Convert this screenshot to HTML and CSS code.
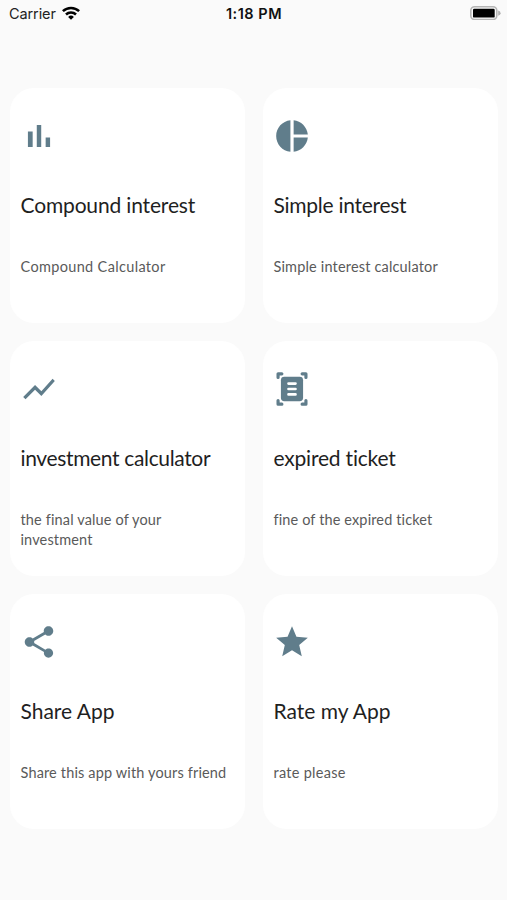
FILE: index.html
```html
<!DOCTYPE html>
<html lang="en">
<head>
<meta charset="utf-8">
<meta name="viewport" content="width=device-width">
<title>Calculators</title>
<link rel="stylesheet" href="styles.css">
</head>
<body>
<header class="status">
  <div class="carrier"><span>Carrier</span>
    <svg class="wifi" viewBox="0 0 18 14"><g fill="none" stroke="#000" stroke-width="2.5"><path d="M.9 5.2a11.6 11.6 0 0 1 16.2 0"/><path d="M4 8.5a7.1 7.1 0 0 1 10 0"/></g><path d="M9 13.8 6.1 10.9a4.2 4.2 0 0 1 5.8 0z"/></svg>
  </div>
  <div class="time">1:18 PM</div>
  <div class="power">
    <svg class="battery" viewBox="0 0 31 14"><rect x=".8" y=".8" width="26" height="12.8" rx="3.8" fill="#fafafa" stroke="#b5b5b5" stroke-width="1.6"/><rect x="3" y="2.8" width="21.7" height="8.8" rx="1.2"/><path d="M28.2 4.6q2.4.9 2.4 2.6t-2.4 2.6z" fill="#b0b0b0"/></svg>
  </div>
</header>
<main class="grid">
  <section class="card">
    <svg class="icon" viewBox="0 0 24 24"><path d="M5 9.2h3V19H5zM10.6 5h2.8v14h-2.8zm5.6 8H19v6h-2.8z"/></svg>
    <h2 class="title t1">Compound interest</h2>
    <p class="desc d1">Compound Calculator</p>
  </section>
  <section class="card">
    <svg class="icon" viewBox="0 0 24 24"><path d="M11 2v20c-5.07-.5-9-4.79-9-10s3.93-9.5 9-10zm2.03 0v8.99H22c-.47-4.74-4.24-8.52-8.97-8.99zm0 11.01V22c4.74-.47 8.5-4.25 8.97-8.99h-8.97z"/></svg>
    <h2 class="title t2">Simple interest</h2>
    <p class="desc d2">Simple interest calculator</p>
  </section>
  <section class="card">
    <svg class="icon" viewBox="0 0 24 24"><path d="M3.5 18.49l6-6.01 4 4L22 6.92l-1.41-1.41-7.09 7.97-4-4L2 16.99z"/></svg>
    <h2 class="title t3">investment calculator</h2>
    <p class="desc d3">the final value of your<br>investment</p>
  </section>
  <section class="card">
    <svg class="icon" viewBox="0 0 24 24"><g fill="none" stroke="#607d8b" stroke-width="2" stroke-linecap="round" stroke-linejoin="round"><path d="M3.2 4.7V2.4h2.4M18.4 2.4h2.4v2.3M3.2 19.3v2.3h2.4M18.4 21.6h2.4v-2.3"/></g><rect x="5" y="4.3" width="14" height="15.5" rx="2.2"/><path stroke="#fff" stroke-width="1.7" stroke-linecap="round" d="M9.8 8.6h4.4M9.8 12h4.4M9.8 15.4h4.4"/></svg>
    <h2 class="title t4">expired ticket</h2>
    <p class="desc d4">fine of the expired ticket</p>
  </section>
  <section class="card">
    <svg class="icon" viewBox="0 0 24 24"><path d="M18 16.08c-.76 0-1.44.3-1.96.77L8.91 12.7c.05-.23.09-.46.09-.7s-.04-.47-.09-.7l7.05-4.11c.54.5 1.25.81 2.04.81 1.66 0 3-1.34 3-3s-1.34-3-3-3-3 1.34-3 3c0 .24.04.47.09.7L8.04 9.81C7.5 9.31 6.79 9 6 9c-1.66 0-3 1.34-3 3s1.34 3 3 3c.79 0 1.5-.31 2.04-.81l7.12 4.16c-.05.21-.08.43-.08.65 0 1.61 1.31 2.92 2.92 2.92s2.92-1.31 2.92-2.92-1.31-2.92-2.92-2.92z"/></svg>
    <h2 class="title t5">Share App</h2>
    <p class="desc d5">Share this app with yours friend</p>
  </section>
  <section class="card">
    <svg class="icon" viewBox="0 0 24 24"><path d="M12 17.27 18.18 21l-1.64-7.03L22 9.24l-7.19-.61L12 2 9.19 8.63 2 9.24l5.46 4.73L5.82 21z"/></svg>
    <h2 class="title t6">Rate my App</h2>
    <p class="desc d6">rate please</p>
  </section>
</main>
</body>
</html>
```
FILE: styles.css
```css
* { box-sizing: border-box; }
body {
  margin: 0;
  height: 900px;
  background: #fafafa;
  font-family: Lato, sans-serif;
}
.status {
  height: 88px;
  padding: 5px 6px 0 9px;
  display: grid;
  grid-template-columns: 1fr auto 1fr;
  align-items: start;
  font: 14.5px/18px Inter, sans-serif;
  color: #222;
}
.carrier { display: flex; gap: 6px; letter-spacing: -.1px; }
.wifi { width: 18px; height: 14px; margin-top: 1px; }
.time { font-weight: 600; color: #111; letter-spacing: .5px; margin-left: -2px; }
.power { display: flex; justify-content: flex-end; }
.battery { width: 31px; height: 14px; margin-top: 1px; }
.grid {
  display: grid;
  grid-template-columns: 235px 235px;
  grid-auto-rows: 235px;
  gap: 18px;
  padding-left: 9.5px;
}
.card {
  border-radius: 24px;
  background: #fff;
  padding: 29px 10px 0 11px;
}
.icon { display: block; width: 38px; height: 38px; margin-left: -.5px; fill: #607d8b; }
.title {
  margin: 37px 0 0;
  font-size: 21px;
  line-height: 26px;
  font-weight: 400;
  color: #1f1f1f;
  white-space: nowrap;
}
.desc {
  margin: 39px 0 0;
  font-size: 14.5px;
  line-height: 19.5px;
  color: #5a5a5a;
  white-space: nowrap;
}
.t1 { letter-spacing: -.16px; }
.t2 { letter-spacing: -.27px; }
.t3 { letter-spacing: -.35px; }
.t4 { letter-spacing: -.2px; }
.d1 { letter-spacing: .34px; }
.d2 { letter-spacing: .17px; }
.d3 { letter-spacing: .14px; }
.d4 { letter-spacing: .13px; }
.d5 { letter-spacing: .15px; }
.d6 { letter-spacing: .27px; }
```
